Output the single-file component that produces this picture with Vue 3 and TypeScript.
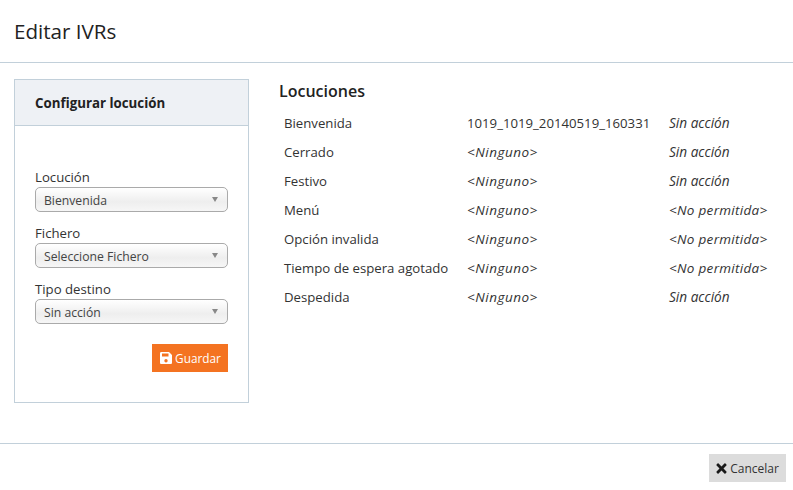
<script setup lang="ts">
const rows: [string, string, string][] = [
  ['Bienvenida', '1019_1019_20140519_160331', 'Sin acción'],
  ['Cerrado', '<Ninguno>', 'Sin acción'],
  ['Festivo', '<Ninguno>', 'Sin acción'],
  ['Menú', '<Ninguno>', '<No permitida>'],
  ['Opción invalida', '<Ninguno>', '<No permitida>'],
  ['Tiempo de espera agotado', '<Ninguno>', '<No permitida>'],
  ['Despedida', '<Ninguno>', 'Sin acción'],
]
const fields = [
  { label: 'Locución', value: 'Bienvenida' },
  { label: 'Fichero', value: 'Seleccione Fichero' },
  { label: 'Tipo destino', value: 'Sin acción' },
]
</script>

<template>
  <div class="modal">
    <header class="head"><h1>Editar IVRs</h1></header>
    <main class="body">
      <section class="panel">
        <div class="panel-head">Configurar locución</div>
        <div class="panel-body">
          <div v-for="f in fields" :key="f.label" class="field">
            <label>{{ f.label }}</label>
            <div class="select"><span>{{ f.value }}</span><i class="caret"></i></div>
          </div>
          <div class="actions">
            <button class="save">
              <svg width="12" height="12" viewBox="0 0 12 12"><path fill="#fff" fill-rule="evenodd" d="M1.3 0H9l3 3v7.700c0 .7-.6 1.300-1.300 1.300H1.300C.6 12 0 11.400 0 10.700V1.300C0 .6.6 0 1.300 0zM2 1.500V4.500H8.500V1.500zM6 7a1.700 1.700 0 1 0 0 3.400A1.700 1.700 0 0 0 6 7z"/></svg>
              <span>Guardar</span>
            </button>
          </div>
        </div>
      </section>
      <section class="list">
        <h2>Locuciones</h2>
        <div v-for="r in rows" :key="r[0]" class="row">
          <span class="c1">{{ r[0] }}</span>
          <span class="c2" :class="{ em: r[1].startsWith('<') }">{{ r[1] }}</span>
          <span class="c3" :class="{ wide: r[2].startsWith('<') }">{{ r[2] }}</span>
        </div>
      </section>
    </main>
    <footer class="foot">
      <button class="cancel">
        <svg width="11" height="11" viewBox="0 0 11 11"><path fill="#1a1a1a" d="M2.600.6 5.500 3.500 8.400.6a.8.8 0 0 1 1.100 0l.9.9a.8.8 0 0 1 0 1.100L7.500 5.500l2.900 2.900a.8.8 0 0 1 0 1.100l-.9.9a.8.8 0 0 1-1.100 0L5.500 7.500l-2.900 2.900a.8.8 0 0 1-1.100 0l-.9-.9a.8.8 0 0 1 0-1.100l2.900-2.900L.6 2.600a.8.8 0 0 1 0-1.100l.9-.9a.8.8 0 0 1 1.100 0z"/></svg>
        <span>Cancelar</span>
      </button>
    </footer>
  </div>
</template>

<style>
body { background: #fff; }
</style>

<style scoped>
.modal {
  width: 793px;
  height: 490px;
  overflow: hidden;
  font-family: "Open Sans", "Noto Sans", sans-serif;
  font-size: 13px;
  color: #333;
  display: flex;
  flex-direction: column;
}
.head {
  height: 62px;
  border-bottom: 1px solid #c2d0da;
  padding: 0 14px;
  display: flex;
  align-items: center;
  flex: none;
}
h1 { margin: 0; font-size: 20.600px; font-weight: 400; color: #222; }
.body {
  flex: none;
  height: 380px;
  padding: 16px 14px 0;
  box-sizing: border-box;
  display: flex;
  gap: 30px;
}
.panel {
  width: 235px;
  height: 324px;
  box-sizing: border-box;
  border: 1px solid #c2d0da;
  flex: none;
}
.panel-head {
  height: 45px;
  background: #eef1f5;
  border-bottom: 1px solid #c2d0da;
  padding-left: 20px;
  display: flex;
  align-items: center;
  font-weight: 700;
  font-size: 13.300px;
  color: #222;
}
.panel-body { padding: 42px 20px 0; }
.field { margin-bottom: 12px; }
label { display: block; font-size: 13.200px; line-height: 18px; margin-bottom: 1px; }
.select {
  height: 25px;
  box-sizing: border-box;
  border: 1px solid #aaa;
  border-radius: 5px;
  background: linear-gradient(#fff, #eee 60%, #f6f6f6);
  padding: 1px 0 0 8px;
  display: flex;
  align-items: center;
  justify-content: space-between;
  font-size: 12.200px;
  color: #444;
}
.caret {
  width: 0;
  height: 0;
  border-left: 3.500px solid transparent;
  border-right: 3.500px solid transparent;
  border-top: 5px solid #888;
  margin: -2px 9px 0 0;
}
.actions { display: flex; justify-content: flex-end; margin-top: 20px; }
button {
  border: 0;
  font-family: inherit;
  display: flex;
  align-items: center;
  justify-content: center;
  gap: 3px;
  padding: 0;
  font-size: 12px;
}
.save { width: 76px; height: 28px; padding-left: 1px; background: #f47321; color: #fff; font-size: 11.800px; }
.list { flex: 1; }
h2 { margin: 0 0 5px; font-size: 16px; font-weight: 600; line-height: 24px; color: #222; }
.row { display: flex; height: 29px; align-items: center; font-size: 13.200px; padding-left: 5px; color: #333; }
.c1 { width: 183px; flex: none; }
.c2 { width: 202px; flex: none; }
.c3 { font-style: italic; white-space: nowrap; font-size: 13.600px; }
.em { font-style: italic; font-size: 13.500px; letter-spacing: .5px; }
.wide { letter-spacing: .3px; font-size: 13.500px; }
.foot {
  border-top: 1px solid #c2d0da;
  flex: none;
  padding: 10px 7px 0 0;
  display: flex;
  justify-content: flex-end;
}
.cancel { width: 77px; height: 28px; background: #dcdcdc; color: #333; }
</style>
